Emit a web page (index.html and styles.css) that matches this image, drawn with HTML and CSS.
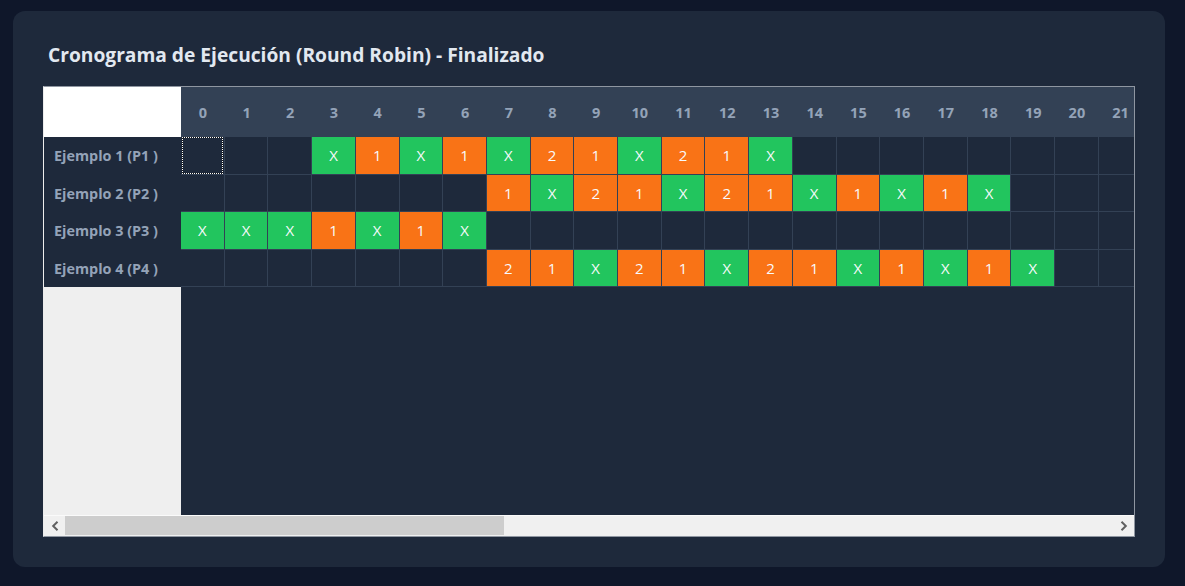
FILE: index.html
```html
<!DOCTYPE html>
<html lang="es">
<head>
<meta charset="utf-8">
<title>Cronograma</title>
<link rel="stylesheet" href="styles.css">
</head>
<body>
<div class="card">
  <h2 class="title">Cronograma de Ejecución (Round Robin) - Finalizado</h2>
  <div class="chart">
    <div class="chart-body">
      <div class="labels">
        <div class="corner"></div>
        <div class="label">Ejemplo 1 (P1 )</div>
        <div class="label">Ejemplo 2 (P2 )</div>
        <div class="label">Ejemplo 3 (P3 )</div>
        <div class="label">Ejemplo 4 (P4 )</div>
      </div>
      <div class="timeline">
        <div class="trow head">
          <span class="hc">0</span><span class="hc">1</span><span class="hc">2</span><span class="hc">3</span><span class="hc">4</span><span class="hc">5</span><span class="hc">6</span><span class="hc">7</span><span class="hc">8</span><span class="hc">9</span><span class="hc">10</span><span class="hc">11</span><span class="hc">12</span><span class="hc">13</span><span class="hc">14</span><span class="hc">15</span><span class="hc">16</span><span class="hc">17</span><span class="hc">18</span><span class="hc">19</span><span class="hc">20</span><span class="hc">21</span>
        </div>
        <div class="trow">
          <span class="c focus"></span><span class="c"></span><span class="c"></span><span class="c run">X</span><span class="c wait">1</span><span class="c run">X</span><span class="c wait">1</span><span class="c run">X</span><span class="c wait">2</span><span class="c wait">1</span><span class="c run">X</span><span class="c wait">2</span><span class="c wait">1</span><span class="c run">X</span><span class="c"></span><span class="c"></span><span class="c"></span><span class="c"></span><span class="c"></span><span class="c"></span><span class="c"></span><span class="c"></span>
        </div>
        <div class="trow">
          <span class="c"></span><span class="c"></span><span class="c"></span><span class="c"></span><span class="c"></span><span class="c"></span><span class="c"></span><span class="c wait">1</span><span class="c run">X</span><span class="c wait">2</span><span class="c wait">1</span><span class="c run">X</span><span class="c wait">2</span><span class="c wait">1</span><span class="c run">X</span><span class="c wait">1</span><span class="c run">X</span><span class="c wait">1</span><span class="c run">X</span><span class="c"></span><span class="c"></span><span class="c"></span>
        </div>
        <div class="trow">
          <span class="c run">X</span><span class="c run">X</span><span class="c run">X</span><span class="c wait">1</span><span class="c run">X</span><span class="c wait">1</span><span class="c run">X</span><span class="c"></span><span class="c"></span><span class="c"></span><span class="c"></span><span class="c"></span><span class="c"></span><span class="c"></span><span class="c"></span><span class="c"></span><span class="c"></span><span class="c"></span><span class="c"></span><span class="c"></span><span class="c"></span><span class="c"></span>
        </div>
        <div class="trow">
          <span class="c"></span><span class="c"></span><span class="c"></span><span class="c"></span><span class="c"></span><span class="c"></span><span class="c"></span><span class="c wait">2</span><span class="c wait">1</span><span class="c run">X</span><span class="c wait">2</span><span class="c wait">1</span><span class="c run">X</span><span class="c wait">2</span><span class="c wait">1</span><span class="c run">X</span><span class="c wait">1</span><span class="c run">X</span><span class="c wait">1</span><span class="c run">X</span><span class="c"></span><span class="c"></span>
        </div>
      </div>
    </div>
    <div class="hscroll">
      <div class="sb-btn">
        <svg width="8" height="10" viewBox="0 0 8 10"><polyline points="6.5,0.8 2.2,5 6.5,9.2" fill="none" stroke="#606060" stroke-width="2"/></svg>
      </div>
      <div class="sb-track"><div class="sb-thumb"></div></div>
      <div class="sb-btn">
        <svg width="8" height="10" viewBox="0 0 8 10"><polyline points="1.5,0.8 5.8,5 1.5,9.2" fill="none" stroke="#606060" stroke-width="2"/></svg>
      </div>
    </div>
  </div>
</div>
</body>
</html>
```
FILE: styles.css
```css
html, body {
  margin: 0;
}
body {
  background: #0f172a;
  padding: 11px 20px 19px 13px;
  font-family: "Open Sans", "Noto Sans", sans-serif;
}
.card {
  width: 1152px;
  height: 556px;
  box-sizing: border-box;
  background: #1e293b;
  border-radius: 12px;
  padding: 30px;
}
.title {
  margin: 0 0 18px 5px;
  height: 27px;
  font-size: 19.2px;
  line-height: 27px;
  font-weight: 700;
  color: #e2e8f0;
  white-space: nowrap;
}
.chart {
  width: 1092px;
  height: 451px;
  box-sizing: border-box;
  border: 1px solid #8f96a1;
  border-left-color: #ececec;
  display: flex;
  flex-direction: column;
  background: #efefef;
}
.chart-body {
  flex: 1;
  display: flex;
  min-height: 0;
}
.labels {
  width: 137px;
  flex: none;
  background: #efefef;
}
.corner {
  height: 50px;
  background: #ffffff;
}
.label {
  height: 37.5px;
  box-sizing: border-box;
  background: #1e293b;
  color: #94a3b8;
  font-size: 14.4px;
  font-weight: 700;
  display: flex;
  align-items: center;
  padding-left: 10px;
  white-space: nowrap;
}
.timeline {
  flex: 1;
  overflow: hidden;
  background: #1e293b;
}
.trow {
  display: flex;
  width: max-content;
}
.head {
  height: 50px;
  background: #334155;
}
.hc {
  width: 43.714px;
  flex: none;
  display: flex;
  align-items: center;
  justify-content: center;
  color: #94a3b8;
  font-size: 14.5px;
  font-weight: 700;
}
.c {
  position: relative;
  width: 43.714px;
  height: 37.5px;
  flex: none;
  box-sizing: border-box;
  border-right: 1px solid #334155;
  border-bottom: 1px solid #334155;
  display: flex;
  align-items: center;
  justify-content: center;
  color: #f8fafc;
  font-size: 15px;
}
.run {
  background: #22c55e;
}
.wait {
  background: #f97316;
}
.focus::before,
.focus::after {
  content: "";
  position: absolute;
  left: 1px;
  top: 0;
  right: 1px;
  bottom: 0;
}
.focus::before {
  border: 1px solid #111111;
}
.focus::after {
  border: 1px dotted #ffffff;
}
.hscroll {
  height: 21px;
  flex: none;
  box-sizing: border-box;
  border-top: 1px solid #fafafa;
  background: #f0f0f0;
  display: flex;
}
.sb-btn {
  width: 21px;
  flex: none;
  display: flex;
  align-items: center;
  justify-content: center;
}
.sb-track {
  flex: 1;
}
.sb-thumb {
  width: 439px;
  height: 19px;
  background: #cdcdcd;
}
```
